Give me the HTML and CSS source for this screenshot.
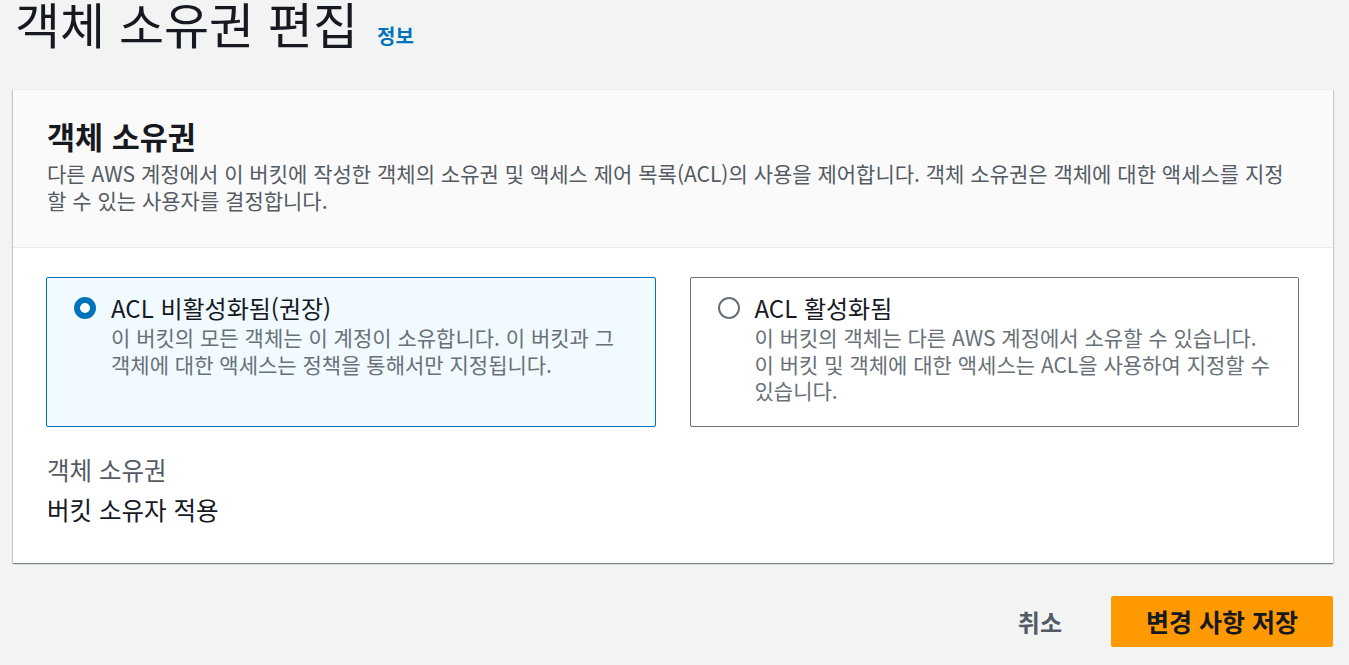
FILE: index.html
```html
<!DOCTYPE html>
<html lang="ko">
<head>
<meta charset="utf-8">
<title>객체 소유권 편집</title>
<link rel="stylesheet" href="styles.css">
</head>
<body>
<main class="page">
  <header class="page-header">
    <h1 class="page-title">객체 소유권 편집</h1>
    <a class="info-link" href="#">정보</a>
  </header>

  <section class="card">
    <div class="card-header">
      <h2 class="card-title">객체 소유권</h2>
      <p class="card-desc">다른 AWS 계정에서 이 버킷에 작성한 객체의 소유권 및 액세스 제어 목록(ACL)의 사용을 제어합니다. 객체 소유권은 객체에 대한 액세스를 지정할 수 있는 사용자를 결정합니다.</p>
    </div>
    <div class="card-body">
      <div class="tiles">
        <div class="tile tile-selected">
          <span class="radio radio-checked"></span>
          <div class="tile-text">
            <div class="tile-label">ACL 비활성화됨(권장)</div>
            <div class="tile-desc">이 버킷의 모든 객체는 이 계정이 소유합니다. 이 버킷과 그 객체에 대한 액세스는 정책을 통해서만 지정됩니다.</div>
          </div>
        </div>
        <div class="tile">
          <span class="radio"></span>
          <div class="tile-text">
            <div class="tile-label">ACL 활성화됨</div>
            <div class="tile-desc">이 버킷의 객체는 다른 AWS 계정에서 소유할 수 있습니다. 이 버킷 및 객체에 대한 액세스는 ACL을 사용하여 지정할 수 있습니다.</div>
          </div>
        </div>
      </div>
      <div class="kv">
        <div class="kv-label">객체 소유권</div>
        <div class="kv-value">버킷 소유자 적용</div>
      </div>
    </div>
  </section>

  <div class="actions">
    <button class="btn-link" type="button">취소</button>
    <button class="btn-primary" type="button">변경 사항 저장</button>
  </div>
</main>
</body>
</html>
```

FILE: styles.css
```css
* { box-sizing: border-box; }

html, body {
  margin: 0;
  padding: 0;
  background: #f2f3f3;
}

body {
  font-family: "Noto Sans CJK KR", "Noto Sans", sans-serif;
  color: #16191f;
}

.page {
  padding: 0 16px 0 13px;
}

.page-header {
  display: flex;
  align-items: baseline;
  gap: 19px;
  padding-left: 2px;
  margin-top: -3px;
}

.page-title {
  margin: 0;
  font-size: 49px;
  line-height: 52px;
  font-weight: 400;
  color: #16191f;
}

.info-link {
  font-size: 20px;
  font-weight: 700;
  color: #0073bb;
  text-decoration: none;
}

.card {
  margin-top: 39px;
  background: #ffffff;
  border-top: 1px solid #eaeded;
  box-shadow: 0 1px 1px 0 rgba(0, 28, 36, 0.3), 1px 1px 1px 0 rgba(0, 28, 36, 0.15), -1px 1px 1px 0 rgba(0, 28, 36, 0.15);
}

.card-header {
  background: #fafafa;
  border-bottom: 1px solid #eaeded;
  padding: 28px 34px 33px 34px;
}

.card-title {
  margin: 0;
  font-size: 30.5px;
  line-height: 36px;
  font-weight: 700;
  color: #16191f;
}

.card-desc {
  margin: 6px 0 0 0;
  font-size: 21px;
  line-height: 27px;
  color: #545b64;
}

.card-body {
  padding: 29px 34px 38px 33px;
}

.tiles {
  display: grid;
  grid-template-columns: 1fr 1fr;
  gap: 34px;
}

.tile {
  display: flex;
  align-items: flex-start;
  gap: 15px;
  min-height: 149px;
  padding: 15px 22px 22px 27px;
  border: 1px solid #687078;
  border-radius: 2px;
  background: #ffffff;
}

.tile-selected {
  border-color: #0073bb;
  background: #f1faff;
}

.radio {
  flex: none;
  width: 22px;
  height: 22px;
  margin-top: 4px;
  border-radius: 50%;
  border: 2px solid #687078;
  background: #ffffff;
}

.radio-checked {
  border: 6px solid #0073bb;
}

.tile-label {
  font-size: 24px;
  line-height: 30px;
  color: #16191f;
}

.tile-desc {
  margin-top: 1px;
  font-size: 21px;
  line-height: 26.5px;
  color: #687078;
}

.kv {
  margin-top: 28px;
  padding-left: 1px;
}

.kv-label {
  font-size: 24.5px;
  line-height: 30px;
  color: #545b64;
}

.kv-value {
  margin-top: 10px;
  font-size: 24.5px;
  line-height: 30px;
  color: #16191f;
}

.actions {
  display: flex;
  justify-content: flex-end;
  align-items: center;
  gap: 27px;
  margin-top: 33px;
}

.btn-link {
  font-family: inherit;
  font-size: 24px;
  font-weight: 700;
  color: #545b64;
  background: none;
  border: none;
  padding: 0 22px;
  height: 51px;
}

.btn-primary {
  font-family: inherit;
  width: 222px;
  height: 51px;
  font-size: 25px;
  font-weight: 700;
  color: #16191f;
  background: #ff9900;
  border: none;
  border-radius: 2px;
}
```
